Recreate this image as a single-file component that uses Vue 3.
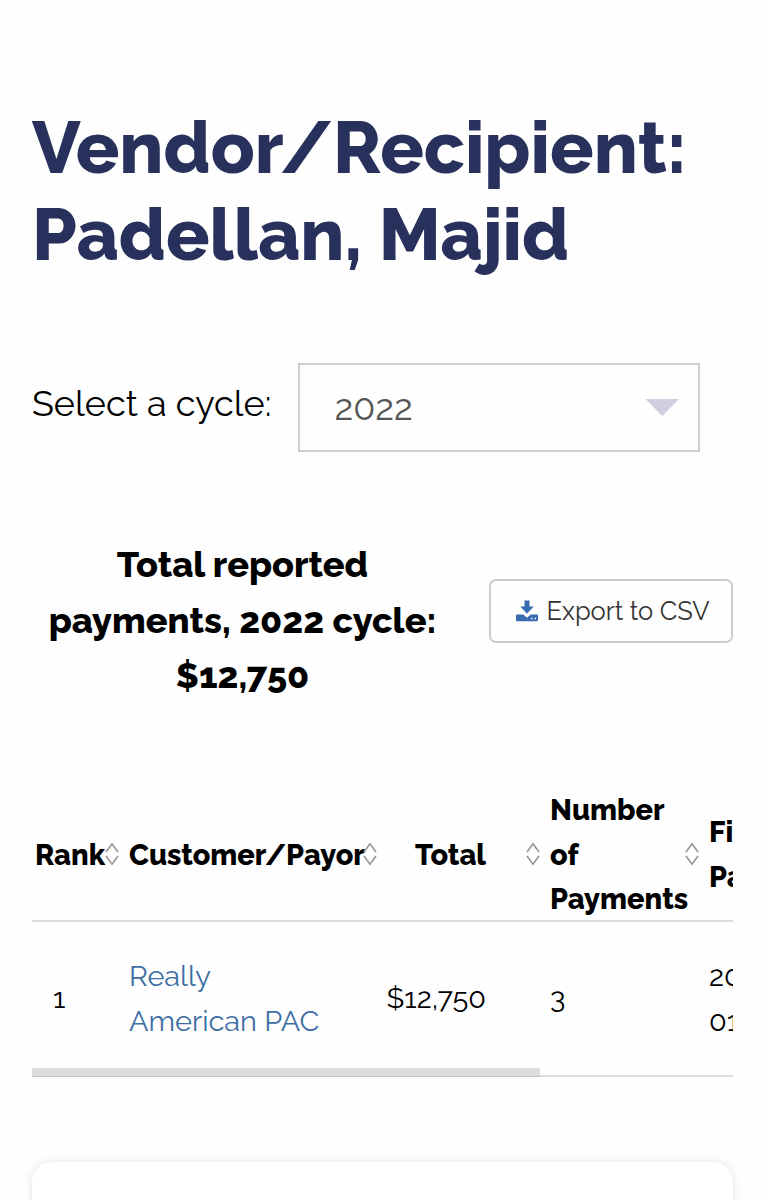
<template>
  <main class="page">
    <h1 class="title">Vendor/Recipient:<br>Padellan, Majid</h1>

    <div class="cycle">
      <label class="cycle-label">Select a cycle:</label>
      <div class="cycle-select">
        <span>{{ cycle }}</span>
        <svg class="caret" width="34" height="17" viewBox="0 0 34 17">
          <path d="M0.500 0H34L17.250 17Z" fill="#cfcfdf" />
        </svg>
      </div>
    </div>

    <div class="summary">
      <h2 class="summary-text">
        Total reported<br>payments, {{ cycle }} cycle:<br>{{ total }}
      </h2>
      <button class="export">
        <svg width="24" height="22" viewBox="0 0 24 22" fill="#376cb0">
          <path d="M9.500 0.500h5v6h4.200L12 13.800 5.300 6.500h4.200z" />
          <path fill-rule="evenodd" d="M2 14.500h6.200L12 17.800l3.800-3.300H21.800a1.200 1.200 0 0 1 1.200 1.200v4.300a1.300 1.300 0 0 1-1.300 1.300H2.300A1.300 1.300 0 0 1 1 20V15.700A1.200 1.200 0 0 1 2 14.500zM16 17.800v1.500h1.500v-1.500zM19.500 17.800v1.500h1.500v-1.500z" />
        </svg>
        <span>Export to CSV</span>
      </button>
    </div>

    <div class="table-scroll">
      <div class="row head">
        <div v-for="col in columns" :key="col.key" :class="['cell', col.key]">
          <div>
            <div v-for="line in col.lines" :key="line">{{ line }}</div>
          </div>
          <svg class="sort" width="14" height="24" viewBox="0 0 14 24">
            <path d="M1 10L7 1.800L13 10M1 14L7 22.200L13 14" />
          </svg>
        </div>
      </div>
      <div v-for="row in rows" :key="row.rank" class="row body">
        <div class="cell rank">{{ row.rank }}</div>
        <div class="cell payor">
          <a>{{ row.payor[0] }}<br>{{ row.payor[1] }}</a>
        </div>
        <div class="cell total">{{ row.total }}</div>
        <div class="cell count">{{ row.count }}</div>
        <div class="cell first">{{ row.first[0] }}<br>{{ row.first[1] }}</div>
      </div>
      <div class="scrollbar"></div>
    </div>

    <section class="card"></section>
  </main>
</template>

<script setup>
import { ref } from 'vue';

const cycle = ref('2022');
const total = ref('$12,750');

const columns = [
  { key: 'rank', lines: ['Rank'] },
  { key: 'payor', lines: ['Customer/Payor'] },
  { key: 'total', lines: ['Total'] },
  { key: 'count', lines: ['Number', 'of', 'Payments'] },
  { key: 'first', lines: ['First', 'Payment'] }
];

const rows = [
  {
    rank: 1,
    payor: ['Really', 'American PAC'],
    total: '$12,750',
    count: 3,
    first: ['2022-', '01-03']
  }
];
</script>

<style>
body {
  background: #fefefe;
}
</style>

<style scoped>
.page {
  box-sizing: border-box;
  width: 765px;
  height: 1200px;
  padding: 104px 32px 0;
  overflow: hidden;
  font-family: Raleway, Lato, "Open Sans", sans-serif;
  color: #000;
}

.title {
  margin: 0;
  font-size: 72.200px;
  line-height: 87px;
  font-weight: 800;
  color: #27315b;
  white-space: nowrap;
}

.cycle {
  display: flex;
  margin-top: 85px;
  height: 89px;
}

.cycle-label {
  width: 266px;
  font-size: 36px;
  line-height: 80px;
  white-space: nowrap;
}

.cycle-select {
  box-sizing: border-box;
  display: flex;
  align-items: center;
  justify-content: space-between;
  width: 402px;
  padding: 0 19px 0 34.500px;
  border: 2px solid #cdced3;
  font-size: 36px;
  line-height: 40px;
  color: #555;
}

.cycle-select span {
  padding-bottom: 2px;
}

.summary {
  display: flex;
  align-items: flex-start;
  justify-content: space-between;
  margin-top: 85px;
  height: 168px;
}

.summary-text {
  width: 421px;
  margin: 0;
  font-size: 36.100px;
  line-height: 55.500px;
  font-weight: 800;
  text-align: center;
  white-space: nowrap;
}

.export {
  box-sizing: border-box;
  display: flex;
  align-items: center;
  gap: 8px;
  width: 244px;
  height: 64px;
  margin-top: 42px;
  padding: 0 0 1px 23.500px;
  border: 2px solid #ccc;
  border-radius: 7px;
  background: #fefefe;
  font-family: inherit;
  font-size: 25.500px;
  color: #333;
  white-space: nowrap;
}

.table-scroll {
  position: relative;
  margin-top: 83px;
  height: 289px;
  overflow: hidden;
}

.row {
  display: grid;
  grid-template-columns: 94px 258px 163px 159px 160px;
  width: 834px;
  font-size: 28.900px;
  line-height: 44.500px;
  border-bottom: 2px solid #ddd;
}

.cell {
  display: flex;
  align-items: center;
  padding-left: 3px;
  white-space: nowrap;
}

.head {
  height: 132px;
  font-weight: 800;
}

.head .cell {
  position: relative;
  padding-bottom: 2px;
}

.sort {
  position: absolute;
  right: 7px;
  top: 54px;
  fill: none;
  stroke: #969696;
  stroke-width: 1.600;
}

.body {
  height: 153px;
}

.body .rank {
  padding-left: 21px;
}

.total {
  justify-content: flex-end;
  padding-right: 61px;
}

.payor a {
  color: #3d6fa5;
}

.scrollbar {
  position: absolute;
  left: 0;
  bottom: 0;
  width: 508px;
  height: 9px;
  background: #ddd;
  border-bottom: 1px solid #c6c6c6;
  box-sizing: border-box;
}

.card {
  height: 100px;
  margin-top: 85px;
  border-radius: 20px;
  background: #fff;
  box-shadow: 0 0 8px rgba(0, 0, 0, 0.12);
}
</style>
